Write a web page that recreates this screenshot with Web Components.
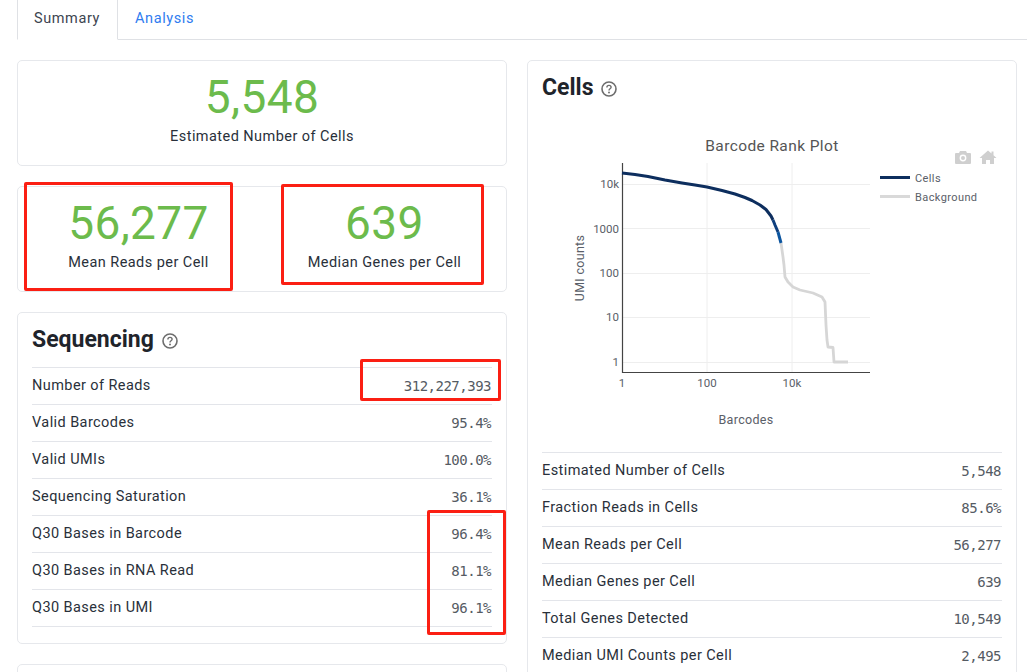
<!DOCTYPE html>
<html lang="en"><head><meta charset="utf-8"><title>Summary</title>
<style>
html,body{margin:0;padding:0;background:#fff;height:672px;overflow:hidden}
body{font-family:Roboto,"Liberation Sans",sans-serif;color:#29303a;position:relative}
</style></head><body>
<x-app></x-app>
<script>
const def=(n,html)=>customElements.define(n,class extends HTMLElement{
  constructor(){super();this.attachShadow({mode:'open'}).innerHTML=html;}
  connectedCallback(){const r=this.shadowRoot;
    if(this.hasAttribute('label')||this.hasAttribute('value')){r.querySelectorAll('[data-a]').forEach(e=>e.textContent=this.getAttribute(e.dataset.a));}
  }
});
def('x-tabs',`<style>
:host{display:flex;height:40px;box-sizing:border-box;margin:0 2px 0 17px;border-bottom:1px solid #dfe1e5;font-size:14.5px;letter-spacing:.6px}
div{box-sizing:border-box;height:40px;padding:9px 16px 0 16px;line-height:20px}
.a{width:101px;border:1px solid #dfe1e5;border-width:0 1px;border-bottom:1px solid #fff;color:#3c4550}
.b{color:#2f7cf0;padding-left:17px}
</style><div class="a">Summary</div><div class="b">Analysis</div>`);
def('x-card',`<style>
:host{display:block;box-sizing:border-box;border:1px solid #e6e8ec;border-radius:5px;background:#fff}
</style><slot></slot>`);
def('x-stat',`<style>
:host{display:flex;flex-direction:column;align-items:center;width:100%}
.n{font-size:46px;line-height:52px;color:#6cbb4c;letter-spacing:.4px;font-weight:400}
.l{font-size:14.5px;line-height:20px;color:#29303a;letter-spacing:.44px;margin-top:4px}
</style><div class="n" data-a="value"></div><div class="l" data-a="label"></div>`);
def('x-help',`<style>:host{display:inline-flex;width:16px;height:16px;margin-left:8px;transform:translateY(1px)}svg{display:block}</style>
<svg width="16" height="16" viewBox="0 0 16 16" fill="none"><circle cx="8" cy="8" r="7" stroke="#6d6d6d" stroke-width="1.6"/><path d="M5.900 6.400C5.900 5 6.900 4.400 8 4.400c1.200 0 2.100.7 2.100 1.800 0 1.600-2.100 1.600-2.100 3.200" stroke="#6d6d6d" stroke-width="1.4"/><circle cx="8" cy="11.500" r=".95" fill="#6d6d6d"/></svg>`);
def('x-heading',`<style>
:host{display:flex;align-items:center;font-size:23px;line-height:28px;font-weight:700;color:#1f242b;height:28px}
</style><slot></slot><x-help></x-help>`);
def('x-row',`<style>
:host{display:flex;justify-content:space-between;align-items:center;height:37px;box-sizing:border-box;border-bottom:1px solid #e3e5ea;font-size:14.5px;letter-spacing:.42px;color:#29303a}
.l{padding-bottom:1px}
.v{font-family:"DejaVu Sans Mono","Liberation Mono",monospace;font-size:14px;letter-spacing:-.5px;color:#555b63;padding:0 1px 0 0}
</style><span class="l" data-a="label"></span><span class="v" data-a="value"></span>`);
def('x-table',`<style>:host{display:block;border-top:1px solid #e3e5ea}</style><slot></slot>`);
def('x-callout',`<style>:host{position:absolute;box-sizing:border-box;border:3px solid #fb1f13;border-radius:2px;pointer-events:none}</style>`);
def('x-plot',`<style>:host{display:block;height:327px}svg{display:block;overflow:visible}
text{font-family:Roboto,"Liberation Sans",sans-serif;fill:#5a6068}</style>
<svg width="488" height="327" viewBox="528 125 488 327">
<g stroke="#eeeeee" stroke-width="1"><path d="M707 163V372M792 163V372M622 184.500H870M622 228.500H870M622 273.500H870M622 317.500H870M622 362.500H870"/></g>
<path d="M622.500 163V372.500H870" fill="none" stroke="#444" stroke-width="1.200"/>
<text x="772" y="151" text-anchor="middle" font-size="15.500" letter-spacing=".4" style="fill:#555">Barcode Rank Plot</text>
<g font-size="11.500" text-anchor="end"><text x="619" y="188">10k</text><text x="619" y="233">1000</text><text x="619" y="277">100</text><text x="619" y="321">10</text><text x="619" y="366">1</text></g>
<g font-size="11.500" text-anchor="middle"><text x="622" y="387">1</text><text x="707" y="387">100</text><text x="792" y="387">10k</text></g>
<text x="746" y="424" text-anchor="middle" font-size="12.500" letter-spacing=".3">Barcodes</text>
<text transform="translate(584 268) rotate(-90)" text-anchor="middle" font-size="12.500" letter-spacing=".3">UMI counts</text>
<path d="M781 243L783 257L784 265L785 277L788 282L793 287L800 290L813 293L822 297L825 302L826 325L827 340L828 347L833 347.500L834 362L848 362" fill="none" stroke="#d6d6d6" stroke-width="2.800" stroke-linejoin="round"/>
<path d="M622 173L635 174.500L648 176.500L665 180L682 183L695 185L707 187L722 190.500L735 194L745 197.500L752 200.500L760 205L766 209.500L771 216L773 220" fill="none" stroke="#0d2e5e" stroke-width="3" stroke-linejoin="round"/>
<path d="M773 220L775 225L778 232" fill="none" stroke="#0e3f7e" stroke-width="3"/>
<path d="M778 232L781 243" fill="none" stroke="#0c559f" stroke-width="3"/>
<path d="M880 177.500H910" stroke="#0d2e5e" stroke-width="3"/><path d="M880 196.500H910" stroke="#d9d9d9" stroke-width="3"/>
<g font-size="11" letter-spacing=".4"><text x="915" y="182">Cells</text><text x="915" y="201">Background</text></g>
<g fill="#cfcfcf"><path d="M956 153h3l1-2h6l1 2h3a1 1 0 0 1 1 1v9a1 1 0 0 1-1 1h-14a1 1 0 0 1-1-1v-9a1 1 0 0 1 1-1z"/><path d="M988 150.500l-8.500 7.500h2.500v6h4v-4h4v4h4v-6h2.500l-3-2.700v-3.800h-2v2z"/></g>
<circle cx="963" cy="158" r="2.700" fill="none" stroke="#fff" stroke-width="1.400"/>
</svg>`);
def('x-app',`<style>
:host{display:block;position:relative;width:1029px;height:672px;overflow:hidden}
.cols{display:flex;gap:20px;padding:20px 12px 0 17px}
.col{width:490px;display:flex;flex-direction:column;gap:20px;flex:none}
.hero{height:106px;padding-top:10px;box-sizing:border-box}
.pair{display:block;height:106px;box-sizing:border-box}
.pairin{display:grid;grid-template-columns:245px 245px;padding-top:10px}
.pairin x-stat:first-child{transform:translateX(-2px)}
.pairin x-stat:last-child{transform:translateX(-1px)}
.sec{padding:13px 14px 16px;box-sizing:border-box}
.seq{height:332px}
.cells{height:700px}
.hd{margin-bottom:13px}
.plotwrap{margin:23px 0 0 -14px}
</style>
<x-tabs></x-tabs>
<div class="cols">
 <div class="col">
  <x-card class="hero"><x-stat value="5,548" label="Estimated Number of Cells"></x-stat></x-card>
  <x-card class="pair"><div class="pairin"><x-stat value="56,277" label="Mean Reads per Cell"></x-stat><x-stat value="639" label="Median Genes per Cell"></x-stat></div></x-card>
  <x-card class="sec seq">
   <x-heading class="hd">Sequencing</x-heading>
   <x-table>
    <x-row label="Number of Reads" value="312,227,393"></x-row>
    <x-row label="Valid Barcodes" value="95.4%"></x-row>
    <x-row label="Valid UMIs" value="100.0%"></x-row>
    <x-row label="Sequencing Saturation" value="36.1%"></x-row>
    <x-row label="Q30 Bases in Barcode" value="96.4%"></x-row>
    <x-row label="Q30 Bases in RNA Read" value="81.1%"></x-row>
    <x-row label="Q30 Bases in UMI" value="96.1%"></x-row>
   </x-table>
  </x-card>
  <x-card style="height:200px"></x-card>
 </div>
 <div class="col">
  <x-card class="sec cells">
   <x-heading>Cells</x-heading>
   <div class="plotwrap"><x-plot></x-plot></div>
   <x-table>
    <x-row label="Estimated Number of Cells" value="5,548"></x-row>
    <x-row label="Fraction Reads in Cells" value="85.6%"></x-row>
    <x-row label="Mean Reads per Cell" value="56,277"></x-row>
    <x-row label="Median Genes per Cell" value="639"></x-row>
    <x-row label="Total Genes Detected" value="10,549"></x-row>
    <x-row label="Median UMI Counts per Cell" value="2,495"></x-row>
   </x-table>
  </x-card>
 </div>
</div>
<x-callout style="left:24px;top:182px;width:209px;height:109px"></x-callout>
<x-callout style="left:281px;top:184px;width:203px;height:101px"></x-callout>
<x-callout style="left:360px;top:359px;width:141px;height:42px"></x-callout>
<x-callout style="left:427px;top:510px;width:79px;height:125px"></x-callout>`);
</script>
</body></html>
